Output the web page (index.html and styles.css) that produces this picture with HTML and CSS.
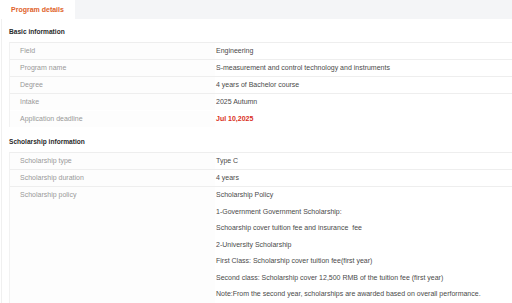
FILE: index.html
```html
<!DOCTYPE html>
<html lang="en">
<head>
    <meta charset="UTF-8">
    <meta name="viewport" content="width=device-width, initial-scale=1.0">
    <title>Program details</title>
    <link rel="stylesheet" href="styles.css">
</head>
<body>
    <div class="tabs">
        <div class="tab ativo">Program details</div>
    </div>
    <div class="painel">
        <h3 class="titulo">Basic information</h3>
        <div class="tabela">
            <div class="linha"><span class="rotulo">Field</span><span class="valor">Engineering</span></div>
            <div class="linha"><span class="rotulo">Program name</span><span class="valor">S-measurement and control technology and instruments</span></div>
            <div class="linha"><span class="rotulo">Degree</span><span class="valor">4 years of Bachelor course</span></div>
            <div class="linha"><span class="rotulo">Intake</span><span class="valor">2025 Autumn</span></div>
            <div class="linha sem-borda"><span class="rotulo">Application deadline</span><span class="valor prazo">Jul 10,2025</span></div>
        </div>

        <h3 class="titulo">Scholarship information</h3>
        <div class="tabela com-fundo">
            <div class="linha"><span class="rotulo">Scholarship type</span><span class="valor">Type C</span></div>
            <div class="linha"><span class="rotulo">Scholarship duration</span><span class="valor">4 years</span></div>
            <div class="linha alta">
                <span class="rotulo">Scholarship policy</span>
                <div class="valor politica">
                    <p>Scholarship Policy</p>
                    <p>1-Government Government Scholarship:</p>
                    <p>Schoarship cover tuition fee and insurance&nbsp; fee</p>
                    <p>2-University Scholarship</p>
                    <p>First Class: Scholarship cover tuition fee(first year)</p>
                    <p>Second class: Scholarship cover 12,500 RMB of the tuition fee (first year)</p>
                    <p>Note:From the second year, scholarships are awarded based on overall performance.</p>
                </div>
            </div>
        </div>
    </div>
</body>
</html>
```
FILE: styles.css
```css
* {
    padding: 0;
    margin: 0;
    box-sizing: border-box;
    font-family: 'Liberation Sans', Arial, Helvetica, sans-serif;
}

body {
    background: #fff;
    color: #333;
    font-size: 7px;
}

/* Abas */
.tabs {
    display: flex;
    height: 19px;
    background: #f4f5f7;
}

.tab {
    padding: 0 11px;
    line-height: 19px;
    font-size: 7px;
    font-weight: bold;
    color: #888;
}

.tab.ativo {
    background: #fff;
    color: #e0622a;
}

/* Painel */
.painel {
    margin-left: 1px;
    padding-left: 7px;
    border-left: 1px solid #f0f0f0;
}

.titulo {
    padding-top: 8px;
    margin-bottom: 5px;
    line-height: 10px;
    font-size: 6.6px;
    font-weight: bold;
    color: #2a2a2a;
}

.tabela + .titulo {
    padding-top: 10px;
}

.tabela {
    border-top: 1px solid #eee;
    border-left: 1px solid #f2f2f2;
}

.tabela.com-fundo {
    border-bottom: 1px solid #eee;
}

.linha {
    display: grid;
    grid-template-columns: 205px 1fr;
    height: 17px;
    border-top: 1px solid #eee;
    line-height: 16px;
}

.linha:first-child {
    height: 16px;
    border-top: none;
}

.linha.sem-borda {
    border-top-color: transparent;
}

.linha.alta {
    height: auto;
}

.rotulo {
    padding-left: 10px;
    background: #fdfdfd;
    color: #999;
}

.valor {
    padding-left: 1px;
    color: #4a4a4a;
}

.valor.prazo {
    color: #d9301c;
    font-weight: bold;
}

.politica p {
    line-height: 16.5px;
}
```
